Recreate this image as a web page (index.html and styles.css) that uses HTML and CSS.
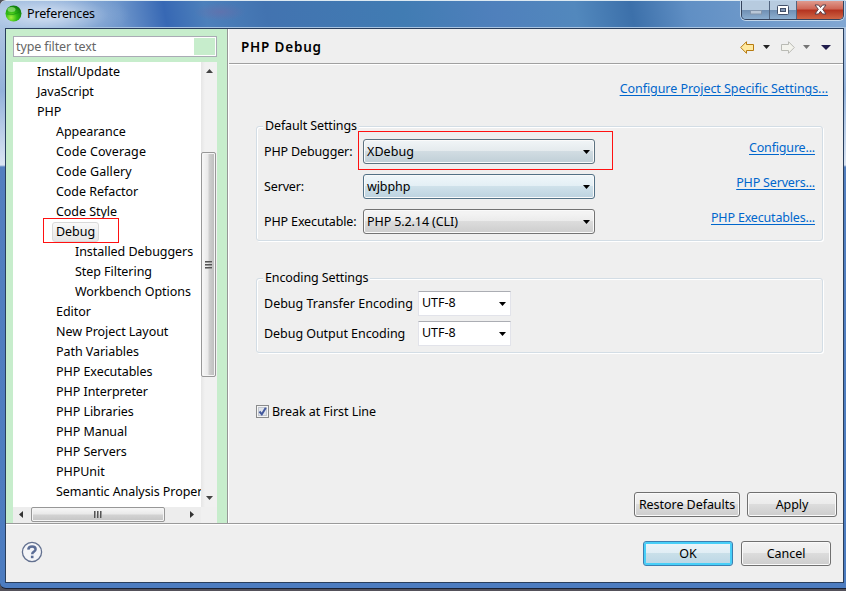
FILE: index.html
```html
<!DOCTYPE html>
<html lang="en">
<head>
<meta charset="utf-8">
<title>Preferences</title>
<link rel="stylesheet" href="styles.css">
</head>
<body>
<div class="window">
  <header class="titlebar">
    <svg class="app-icon" width="17" height="17" viewBox="0 0 17 17"><defs><radialGradient id="ball" cx=".35" cy=".75" r=".8"><stop offset="0" stop-color="#a2f03c"/><stop offset=".45" stop-color="#32bd15"/><stop offset="1" stop-color="#0b780d"/></radialGradient></defs><circle cx="8.5" cy="8.5" r="8" fill="url(#ball)"/><ellipse cx="6.5" cy="4.500" rx="4" ry="2.500" fill="#b5ef9b" opacity=".6"/><path d="M2 9q6 2 13-2" fill="none" stroke="#128a10" opacity=".6"/></svg>
    <span class="title">Preferences</span>
    <div class="controls">
      <span class="control min"><svg width="12" height="5"><rect x=".5" y=".5" width="11" height="3.5" fill="#b9c7d7" stroke="#8395ab"/></svg></span>
      <span class="control max"><svg width="12" height="10"><rect x=".5" y=".5" width="11" height="9" rx="1" fill="#fff" stroke="#42506a"/><rect x="3.500" y="3.500" width="5" height="3" fill="#8396b4" stroke="#42506a"/></svg></span>
      <span class="control close"><svg width="13" height="11"><path d="M1 1h3.500L6.500 3.500 8.500 1H12L8.700 5.300 12 10H8.500L6.500 7.300 4.500 10H1L4.300 5.300Z" fill="#fff" stroke="#59404a"/></svg></span>
    </div>
  </header>

  <div class="client">
    <div class="upper">
      <aside class="sidebar">
        <div class="filter"><span>type filter text</span><i></i></div>
        <div class="tree">
          <ul>
            <li class="l1">Install/Update</li><li class="l1">JavaScript</li><li class="l1">PHP</li>
            <li>Appearance</li><li class="wide">Code Coverage</li><li class="wide">Code Gallery</li><li>Code Refactor</li><li>Code Style</li>
            <li class="selected"><span>Debug</span></li>
            <li class="l3">Installed Debuggers</li><li class="l3">Step Filtering</li><li class="l3">Workbench Options</li>
            <li>Editor</li><li>New Project Layout</li><li>Path Variables</li><li>PHP Executables</li><li>PHP Interpreter</li><li>PHP Libraries</li><li>PHP Manual</li><li>PHP Servers</li><li>PHPUnit</li><li class="last">Semantic Analysis Proper</li>
          </ul>
          <div class="vscroll">
            <svg width="7" height="4"><path d="M0 4 3.500 0 7 4Z" fill="#444"/></svg>
            <div class="vthumb"><b></b><b></b><b></b></div>
            <svg width="7" height="4"><path d="M0 0H7L3.500 4Z" fill="#444"/></svg>
          </div>
          <div class="hscroll">
            <svg width="4" height="7"><path d="M4 0V7L0 3.500Z" fill="#333"/></svg>
            <div class="hthumb"><b></b><b></b><b></b></div>
            <svg width="4" height="7"><path d="M0 0V7L4 3.500Z" fill="#333"/></svg>
          </div>
        </div>
      </aside>

      <main class="page">
        <div class="page-head">
          <h1>PHP Debug</h1>
          <div class="nav">
            <svg width="15" height="13" viewBox="0 0 15 13"><path d="M.7 6.500 6.500.7V3.500H13.500V9.500H6.500V12.300Z" fill="#ffe9a0" stroke="#b67a10"/></svg>
            <svg class="n1" width="7" height="4"><path d="M0 0H7L3.500 4Z" fill="#222"/></svg>
            <svg class="n2" width="15" height="13" viewBox="0 0 15 13"><path d="M14.300 6.500 8.500.7V3.500H1.500V9.500H8.500V12.300Z" fill="#f3f3ed" stroke="#b9bab4"/></svg>
            <svg class="n3" width="7" height="4"><path d="M0 0H7L3.500 4Z" fill="#747474"/></svg>
            <svg class="n4" width="10" height="5"><path d="M0 0H10L5 5Z" fill="#211d4c"/></svg>
          </div>
        </div>
        <div class="content">
          <a class="project-link">Configure Project Specific Settings...</a>
          <section class="group defaults">
            <h2>Default Settings</h2>
            <div class="row"><label>PHP Debugger:</label><div class="combo focus"><span>XDebug</span><svg width="7" height="4"><path d="M0 0H7L3.500 4Z"/></svg></div><a>Configure...</a></div>
            <div class="row"><label>Server:</label><div class="combo blue"><span>wjbphp</span><svg width="7" height="4"><path d="M0 0H7L3.500 4Z"/></svg></div><a>PHP Servers...</a></div>
            <div class="row"><label>PHP Executable:</label><div class="combo"><span>PHP 5.2.14 (CLI)</span><svg width="7" height="4"><path d="M0 0H7L3.500 4Z"/></svg></div><a>PHP Executables...</a></div>
            <div class="mark"></div>
          </section>
          <section class="group encoding">
            <h2>Encoding Settings</h2>
            <div class="enc-row"><label class="transfer">Debug Transfer Encoding</label><div class="field"><span>UTF-8</span><svg width="7" height="4"><path d="M0 0H7L3.500 4Z"/></svg></div></div>
            <div class="enc-row"><label>Debug Output Encoding</label><div class="field"><span>UTF-8</span><svg width="7" height="4"><path d="M0 0H7L3.500 4Z"/></svg></div></div>
          </section>
          <div class="check"><svg width="13" height="13"><rect x=".5" y=".5" width="12" height="12" fill="#f5f5f5" stroke="#8a8b8c"/><rect x="2.500" y="2.500" width="8" height="8" fill="#e0e4eb" stroke="#c3c8d0"/><path d="M3.500 6.500 5.800 9.300 9.800 2.800" fill="none" stroke="#43599d" stroke-width="2"/></svg><span>Break at First Line</span></div>
          <div class="page-buttons"><div class="btn restore">Restore Defaults</div><div class="btn">Apply</div></div>
        </div>
      </main>
    </div>
    <footer class="footer">
      <svg class="help" width="22" height="22" viewBox="0 0 22 22"><circle cx="11" cy="11" r="9.600" fill="#f4f5f8" stroke="#62708f" stroke-width="1.300"/><path d="M7.300 8.600Q7.500 5.400 11.100 5.400 14.600 5.400 14.600 8.300 14.600 9.800 12.700 10.900 11.200 11.800 11.200 13.200" fill="none" stroke="#5b6d96" stroke-width="2.500"/><rect x="9.900" y="14.700" width="2.600" height="2.500" fill="#5b6d96"/></svg>
      <div class="btn ok">OK</div><div class="btn">Cancel</div>
    </footer>
  </div>
</div>
</body>
</html>
```

FILE: styles.css
```css
*, *::after { box-sizing: border-box; }
body { margin: 0; background: #53515a; overflow: hidden; font: 12.5px/20px "Noto Sans", sans-serif; letter-spacing: -.05px; color: #000; }
svg { display: block; flex: none; }
.window { width: 846px; height: 589px; padding: 0 2px 5px 5px; border-top: 1px solid #dce9f2; border-bottom: 1px solid #182033; border-radius: 6px 0 0 6px;
  background: linear-gradient(#b9cbe4 0, #93b2da 90px, #dbe5f3 164px, #537fbf 166px, #4c7cc0 100%); }
.titlebar { height: 27px; margin: 0 -2px 0 -5px; padding-left: 5px; display: flex; align-items: flex-start; border-radius: 6px 0 0 0; box-shadow: inset 0 -1px #a9c4e1;
  background: radial-gradient(ellipse 26px 9px at 220px 11px, #7867a170, transparent), radial-gradient(ellipse 85px 25px at 45px 14px, #d3e0f2cc 20%, #b4cae833 75%, transparent), linear-gradient(80deg, #a3bfdf 0, #6e96cb 120px, #3768b4 165px, #4d80bb 205px, #4273b0 265px, #417cb3 400px, #4f80bc 490px, #5288bd 570px, #3c70aa 625px, #608fc4 680px, #84a9d4 846px); }
.app-icon { margin-top: 4px; }
.title { margin: 3px 0 0 5px; letter-spacing: -.15px; }
.controls { height: 19px; margin-left: auto; margin-right: 2px; width: 103px; display: flex; border: 1px solid #34435c; border-top: 0; border-radius: 0 0 5px 5px; box-shadow: 0 0 0 1px #c0d5ea; overflow: hidden; }
.control { width: 28px; display: flex; align-items: center; justify-content: center; padding-bottom: 1px; background: linear-gradient(#b7cbdf 0 48%, #6f8fb3 50%, #8caed0); border-right: 1px solid #52657f; }
.control.max { width: 27px; }
.control.min svg { margin-top: 6px; }
.control.close { flex: 1; border: 0; background: linear-gradient(#df9a8e 0, #cf6554 45%, #b3321f 50%, #cf6545); }
.client { height: 555px; border: 1px solid #293e5c; background: #efefef; display: flex; flex-direction: column; }
.upper { height: 496px; display: flex; border-bottom: 1px solid #fff; box-shadow: inset 0 -1px #9a9a9a; padding-bottom: 1px; }
.sidebar { width: 222px; padding: 7px 10px 0 7px; background: #c7edcc; border-right: 1px solid #969696; }
.filter { width: 204px; height: 21px; display: flex; align-items: center; border: 1px solid #aaabb5; background: #fff; color: #666; padding-left: 2px; letter-spacing: -.12px; }
.filter i { margin-left: auto; margin-right: 1px; width: 21px; height: 17px; background: #c7edcc; }
.tree { margin-top: 5px; width: 204px; height: 461px; display: grid; grid-template: 445px 16px / 188px 16px; background: #f0f0f0; }
ul { list-style: none; margin: 0; padding: 0; background: #fff; overflow: hidden; }
li { height: 20px; padding-left: 43px; white-space: nowrap; }
li.wide { letter-spacing: .1px; }
li.last { letter-spacing: -.07px; }
li.l1 { padding-left: 24px; }
li.l3 { padding-left: 62px; }
.selected { padding-left: 39px; position: relative; }
.selected span { display: inline-block; width: 47px; height: 20px; line-height: 18px; padding-left: 3px; border: 1px solid #d9d9d9; border-radius: 3px; background: linear-gradient(#f9f9f9, #e6e6e6); }
.selected::after { content: ""; position: absolute; left: 30px; top: -4px; width: 76px; height: 25px; border: 1px solid #f11; }
.vscroll { display: flex; flex-direction: column; align-items: center; padding: 7px 0 7px 0; background: linear-gradient(90deg, #e6e6e6, #f1f1f1 4px); }
.vthumb { width: 15px; height: 225px; margin: 79px 1px auto 0; border: 1px solid #979797; border-radius: 2px; background: linear-gradient(90deg, #f7f7f7, #e8e8e8 48%, #d0d0d0 52%, #bcbcbc); display: flex; flex-direction: column; align-items: center; justify-content: center; gap: 1px; box-shadow: inset 0 0 0 1px #f5f5f5; }
.vthumb b { width: 7px; height: 2px; background: #555; border-bottom: 1px solid #999; }
.hscroll { display: flex; align-items: center; padding: 0 5px 1px 6px; background: #ededed; }
.hthumb { width: 134px; height: 15px; margin: 0 25px 0 8px; border: 1px solid #979797; border-radius: 2px; background: linear-gradient(#f7f7f7, #e8e8e8 48%, #d3d3d3 52%, #c4c4c4); display: flex; align-items: center; justify-content: center; gap: 1px; flex: none; box-shadow: inset 0 0 0 1px #f5f5f5; }
.hthumb b { height: 7px; width: 2px; background: #555; border-right: 1px solid #999; }
.page { flex: 1; border-left: 1px solid #fff; }
.page-head { height: 36px; display: flex; align-items: center; border-bottom: 1px solid #fff; box-shadow: inset 0 -1px #a0a0a0; padding: 0 12px 0 12px; }
h1 { margin: 1px 0 0; font: 600 13.5px/20px "Noto Sans", sans-serif; letter-spacing: .8px; }
.nav { margin-left: auto; display: flex; align-items: center; padding-top: 1px; }
.n1 { margin-left: 8px; } .n2 { margin-left: 10px; } .n3 { margin-left: 8px; } .n4 { margin-left: 11px; }
a { color: #0066cc; text-decoration: underline; text-underline-offset: 2px; margin-left: auto; white-space: nowrap; letter-spacing: -.18px; }
.content { padding: 14px 19px 0 27px; display: flex; flex-direction: column; }
.project-link { margin-right: -4px; letter-spacing: -.06px; }
.group { width: 567px; border: 1px solid #d3dde5; border-radius: 3px; box-shadow: 1px 1px #fff, inset 1px 1px #fff; position: relative; padding: 0 7px; }
.defaults { margin-top: 27px; height: 115px; }
.encoding { margin-top: 37px; height: 75px; }
h2 { width: max-content; margin: -11px 0 3px -1px; padding: 0 2px; font: inherit; background: #efefef; letter-spacing: -.12px; }
.row { height: 25px; margin-bottom: 10px; display: flex; align-items: center; }
.row label { width: 99px; white-space: nowrap; letter-spacing: -.14px; }
.row a { margin-top: -8px; }
.combo { width: 232px; height: 25px; display: flex; align-items: center; padding: 0 4px 0 3px; border: 1px solid #737373; border-radius: 3px; background: linear-gradient(#f3f3f3 0 15%, #ebebeb 48%, #dcdcdc 50%, #cdcdcd); box-shadow: inset 0 0 0 1px #fafafa; }
.combo span { letter-spacing: -.1px; }
.combo.focus span { letter-spacing: .05px; }
.combo.focus { border-color: #5c7280; background: linear-gradient(#f1f5f7, #e4eaed 48%, #d1dce2 50%, #c0cfd7); }
.combo.blue { border-color: #527186; background: linear-gradient(#f0f7fa, #e3eff5 48%, #cfe1ea 50%, #bcd2df); }
.combo svg, .field svg { margin-left: auto; }
.mark { position: absolute; left: 101px; top: 4px; width: 255px; height: 39px; border: 1px solid #f11; }
.enc-row { display: flex; align-items: center; height: 25px; margin-bottom: 5px; }
.enc-row label { width: 154px; white-space: nowrap; }
.enc-row .transfer { letter-spacing: 0; }
.field { width: 93px; height: 25px; background: #fff; border: 1px solid #e2e3ea; border-top-color: #abadb3; display: flex; align-items: center; padding: 0 4px 0 3px; }
.field span { margin-top: -2px; }
.check { height: 20px; margin-top: 49px; display: flex; align-items: center; gap: 3px; }
.check svg { margin-top: -1px; }
.page-buttons { display: flex; justify-content: flex-end; gap: 7px; margin: 70px -13px 0 0; }
.btn { width: 90px; height: 25px; border: 1px solid #707070; border-radius: 3px; display: flex; align-items: center; justify-content: center; white-space: nowrap; background: linear-gradient(#f3f3f3, #ebebeb 48%, #dcdcdc 50%, #cdcdcd); box-shadow: inset 0 0 0 1px #fafafa; }
.restore { width: 106px; }
.footer { flex: 1; display: flex; align-items: center; gap: 8px; padding: 0 12px 0 15px; }
.help { margin-right: auto; margin-top: -3px; }
.ok { border-color: #3c7fb1; background: linear-gradient(#edf5f9, #e0edf4 48%, #c9dfe9 50%, #bad6e5); box-shadow: inset 0 0 0 2px #48cff8; }
```
